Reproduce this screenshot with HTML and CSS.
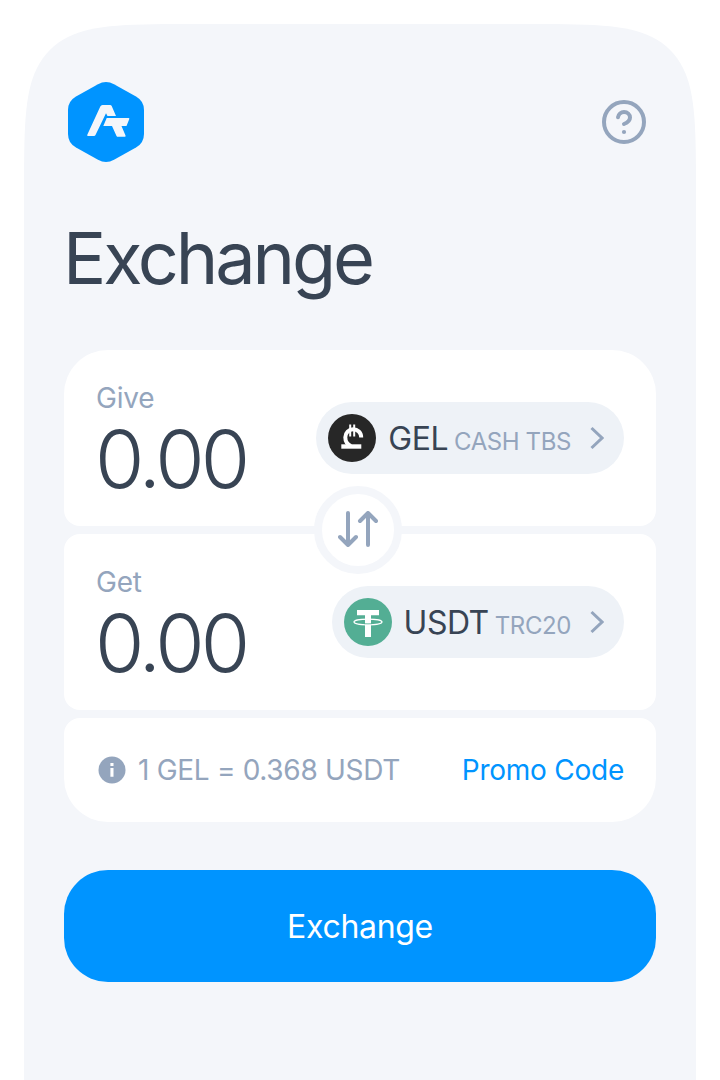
FILE: index.html
```html
<!DOCTYPE html>
<html lang="en">
<head>
    <meta charset="UTF-8">
    <meta name="viewport" content="width=device-width, initial-scale=1.0">
    <title>Exchange</title>
    <link rel="stylesheet" href="styles.css">
</head>
<body>
    <div class="screen">
        <div class="header">
            <svg class="logo" width="76" height="80" viewBox="0 0 76 80">
                <path fill="#0094ff" d="M30 2.200Q38 -2.200 46 2.200L68 14.500Q76 19 76 28V52Q76 61 68 65.500L46 77.800Q38 82.200 30 77.800L8 65.500Q0 61 0 52V28Q0 19 8 14.500Z"/>
                <path fill="#f4f6fa" d="M34.500 23H42Q43.200 23 43.700 24L48 34H39.500L38 31.300L27.500 53Q27 54 26 54H20Q18.800 54 19.300 52.800L32.300 24.500Q33 23 34.500 23Z"/>
                <path fill="#f4f6fa" d="M38.700 36H60.500Q61.800 36 61.200 37.200L58.500 44H53.500L57.500 53.500Q58 54.800 56.800 54.800H50Q49 54.800 48.500 53.900L44 44H35.300Z"/>
            </svg>
            <svg class="help" width="44" height="44" viewBox="0 0 44 44" fill="none" stroke="#94a5bd" stroke-width="4" stroke-linecap="round">
                <circle cx="22" cy="22" r="20"/>
                <path d="M16 17.300C16.500 14 19 12 22 12C25.500 12 28 14.500 28 17.500C28 21.500 25 22.800 22 24"/>
                <circle cx="22" cy="32" r="2.100" fill="#94a5bd" stroke="none"/>
            </svg>
        </div>
        <h1>Exchange</h1>
        <div class="form">
            <div class="card card-first">
                <div class="amount">
                    <div class="label">Give</div>
                    <div class="value">0.00</div>
                </div>
                <div class="currency">
                    <svg width="48" height="48" viewBox="0 0 48 48">
                        <circle cx="24" cy="24" r="24" fill="#272727"/>
                        <path fill="none" stroke="#fff" stroke-width="4" d="M33.200 23.500C33.200 18.500 29.500 15.300 25.200 15.300C20.800 15.300 17.300 18.800 17.300 23.300C17.300 27.500 19.500 30.500 23 32"/>
                        <path fill="none" stroke="#fff" stroke-width="2" d="M22.200 10.500V22.500M26.200 10.500V22.500"/>
                        <path fill="#fff" d="M13.300 30.300H33.300V34.700H13.300Z"/>
                    </svg>
                    <span class="code">GEL</span>
                    <span class="network">CASH TBS</span>
                    <svg class="chevron" width="14" height="24" viewBox="0 0 14 24" fill="none" stroke="#94a5bd" stroke-width="3"><path d="M1.500 2L12 12L1.500 22"/></svg>
                </div>
                <div class="swap">
                    <svg width="40" height="36" viewBox="0 0 40 36" fill="none" stroke="#94a5bd" stroke-width="4" stroke-linecap="round" stroke-linejoin="round">
                        <path d="M10 2V34M2 26L10 34L18 26M30 34V2M22 10L30 2L38 10"/>
                    </svg>
                </div>
            </div>
            <div class="card">
                <div class="amount">
                    <div class="label">Get</div>
                    <div class="value">0.00</div>
                </div>
                <div class="currency">
                    <svg width="48" height="48" viewBox="0 0 48 48">
                        <circle cx="24" cy="24" r="24" fill="#53ae94"/>
                        <path fill="#fff" d="M13 12H35V17.300H27V39H21V17.300H13Z"/>
                        <ellipse cx="24" cy="24" rx="14" ry="2.800" fill="none" stroke="#fff" stroke-width="1.200"/>
                        <path fill="none" stroke="#53ae94" stroke-width="0.800" d="M20 25.700Q24 26 28 25.700"/>
                    </svg>
                    <span class="code">USDT</span>
                    <span class="network">TRC20</span>
                    <svg class="chevron" width="14" height="24" viewBox="0 0 14 24" fill="none" stroke="#94a5bd" stroke-width="3"><path d="M1.500 2L12 12L1.500 22"/></svg>
                </div>
            </div>
            <div class="card card-last">
                <svg class="info" width="28" height="28" viewBox="0 0 28 28">
                    <circle cx="14" cy="14" r="13.500" fill="#94a5bd"/>
                    <path fill="#fff" d="M12.400 7H15.500V10H12.400ZM12.400 12H15.500V20.700H12.400Z"/>
                </svg>
                <span class="rate">1 GEL = 0.368 USDT</span>
                <a class="promo">Promo Code</a>
            </div>
        </div>
        <button class="submit">Exchange</button>
    </div>
</body>
</html>
```
FILE: styles.css
```css
*{
    margin: 0;
    padding: 0;
    box-sizing: border-box;
}
body{
    background-color: #fff;
    font-family: Inter, "Liberation Sans", sans-serif;
    color: #384454;
    overflow: hidden;
}
svg{
    display: block;
    flex-shrink: 0;
}
.screen{
    width: 672px;
    height: 1056px;
    margin: 24px auto 0;
    padding: 58px 40px 0;
    background-color: #f4f6fa;
    clip-path: path("M0 176C0 106 0 70 13 44C20 30 30 20 44 13C70 0 106 0 176 0H496C566 0 602 0 628 13C642 20 652 30 659 44C672 70 672 106 672 176V1056H0Z");
}
.header{
    display: flex;
    justify-content: space-between;
    align-items: center;
    height: 80px;
    padding: 0 10px 0 4px;
}
h1{
    margin-top: 52px;
    margin-left: -1px;
    height: 88px;
    line-height: 88px;
    font-size: 72px;
    font-weight: 400;
    letter-spacing: -3.100px;
}
.form{
    display: flex;
    flex-direction: column;
    gap: 8px;
    margin-top: 48px;
}
.card{
    position: relative;
    display: flex;
    justify-content: space-between;
    align-items: center;
    height: 176px;
    padding: 0 32px;
    border-radius: 16px;
    background-color: #fff;
}
.card-first{
    z-index: 1;
    border-radius: 44px 44px 16px 16px;
}
.card-last{
    height: 104px;
    border-radius: 16px 16px 44px 44px;
}
.amount{
    padding-top: 8px;
}
.label{
    font-size: 28px;
    line-height: 34px;
    letter-spacing: -0.200px;
    color: #94a5bd;
}
.value{
    height: 88px;
    line-height: 88px;
    font-size: 80px;
    font-weight: 300;
    letter-spacing: -3.900px;
    margin-left: -1px;
}
.currency{
    display: flex;
    align-items: center;
    height: 72px;
    padding: 0 20px 0 12px;
    border-radius: 36px;
    background-color: #eef2f7;
}
.code{
    margin: 2px 0 0 12px;
    font-size: 32px;
    line-height: 40px;
    letter-spacing: -0.500px;
}
.network{
    margin: 8px 0 0 6px;
    font-size: 24px;
    line-height: 32px;
    letter-spacing: -0.400px;
    color: #94a5bd;
}
.chevron{
    margin-left: 19px;
}
.swap{
    position: absolute;
    left: 250px;
    top: 136px;
    display: flex;
    align-items: center;
    justify-content: center;
    width: 88px;
    height: 88px;
    padding-bottom: 2px;
    border: 8px solid #f4f6fa;
    border-radius: 50%;
    background-color: #fff;
}
.info{
    margin-left: 2px;
}
.rate{
    margin-left: 12px;
    font-size: 28px;
    letter-spacing: -0.300px;
    color: #94a5bd;
}
.promo{
    margin-left: auto;
    font-size: 28px;
    letter-spacing: -0.250px;
    color: #0094ff;
}
.submit{
    display: block;
    width: 100%;
    height: 112px;
    margin-top: 48px;
    border: none;
    border-radius: 44px;
    background-color: #0094ff;
    color: #fff;
    font-family: inherit;
    font-size: 32px;
    letter-spacing: -0.300px;
}
```
